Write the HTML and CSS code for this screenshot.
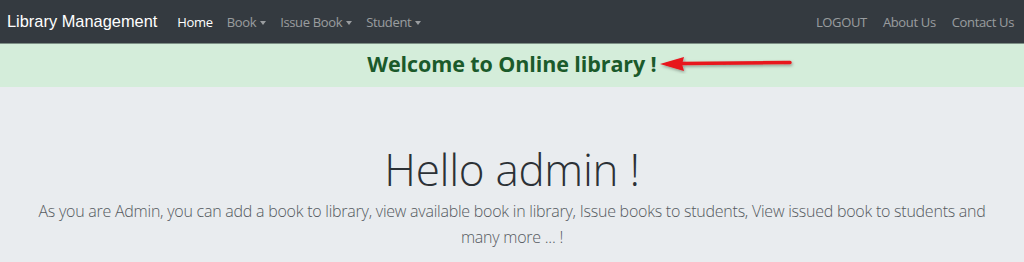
FILE: index.html
```html
<!DOCTYPE html>
<html>
<head>
<meta charset="utf-8">
<link rel="stylesheet" href="styles.css">
</head>
<body>
<nav class="navbar">
  <a class="brand">Library Management</a>
  <ul class="nav">
    <li class="active">Home</li>
    <li class="dropdown">Book</li>
    <li class="dropdown">Issue Book</li>
    <li class="dropdown">Student</li>
  </ul>
  <ul class="nav nav-right">
    <li>LOGOUT</li>
    <li>About Us</li>
    <li>Contact Us</li>
  </ul>
</nav>
<div class="alert">
  <h4 class="welcome">Welcome to Online library !
    <svg class="arrow" width="140" height="20" viewBox="0 0 140 20">
      <defs>
        <filter id="sh" x="-10%" y="-50%" width="120%" height="200%">
          <feDropShadow dx="1" dy="1.5" stdDeviation="1.5" flood-color="#000" flood-opacity="0.35"/>
        </filter>
      </defs>
      <g filter="url(#sh)">
        <path d="M24 9.5 L133 8.5" stroke="#e8141b" stroke-width="3.5" stroke-linecap="round" fill="none"/>
        <path d="M3 10 L27 3 L25 10 L27 17 Z" fill="#e8141b"/>
      </g>
    </svg>
  </h4>
</div>
<section class="jumbotron">
  <h1 class="title">Hello admin !</h1>
  <p class="lead">As you are Admin, you can add a book to library, view available book in library, Issue books to students, View issued book to students and many more ... !</p>
</section>
</body>
</html>
```
FILE: styles.css
```css
* { box-sizing: border-box; }
html, body { margin: 0; padding: 0; }
body {
  font-family: "Open Sans", "Noto Sans", sans-serif;
  background: #e9ecef;
  width: 1024px;
  height: 262px;
  overflow: hidden;
}
.navbar {
  height: 44px;
  background: #343a40;
  display: flex;
  align-items: center;
  padding: 0 10px 0 7px;
  border-bottom: 1px solid #7d8f86;
}
.brand {
  font-family: "Liberation Sans", Arial, sans-serif;
  font-size: 16.4px;
  color: #fff;
  margin-right: 20px;
  margin-top: -1px;
}
.nav {
  list-style: none;
  margin: 0;
  padding: 0;
  display: flex;
  gap: 14px;
  font-size: 13px;
  color: rgba(255,255,255,0.5);
  letter-spacing: -0.35px;
}
.nav li.active { color: #fff; }
.nav li.dropdown::after {
  content: "";
  display: inline-block;
  margin-left: 4px;
  vertical-align: 2px;
  border-top: 4px solid currentColor;
  border-left: 3.5px solid transparent;
  border-right: 3.5px solid transparent;
}
.nav-right { margin-left: auto; gap: 16px; }
.alert {
  background: #d4edda;
  height: 43px;
  display: flex;
  align-items: center;
  justify-content: center;
}
.welcome {
  margin: 0 0 4px;
  position: relative;
  font-size: 21.5px;
  font-weight: 700;
  color: #1b5a2b;
  letter-spacing: -0.1px;
}
.arrow {
  position: absolute;
  left: 100%;
  top: 5px;
  margin-left: 0px;
}
.jumbotron {
  text-align: center;
  padding: 55px 32px 0;
}
.title {
  margin: 0;
  font-size: 44px;
  font-weight: 300;
  color: #2c3136;
  line-height: 54px;
  letter-spacing: -0.3px;
}
.lead {
  margin: 2px auto 0;
  font-size: 16px;
  font-weight: 300;
  color: #555a60;
  line-height: 26px;
  max-width: 960px;
  letter-spacing: -0.24px;
}
```
